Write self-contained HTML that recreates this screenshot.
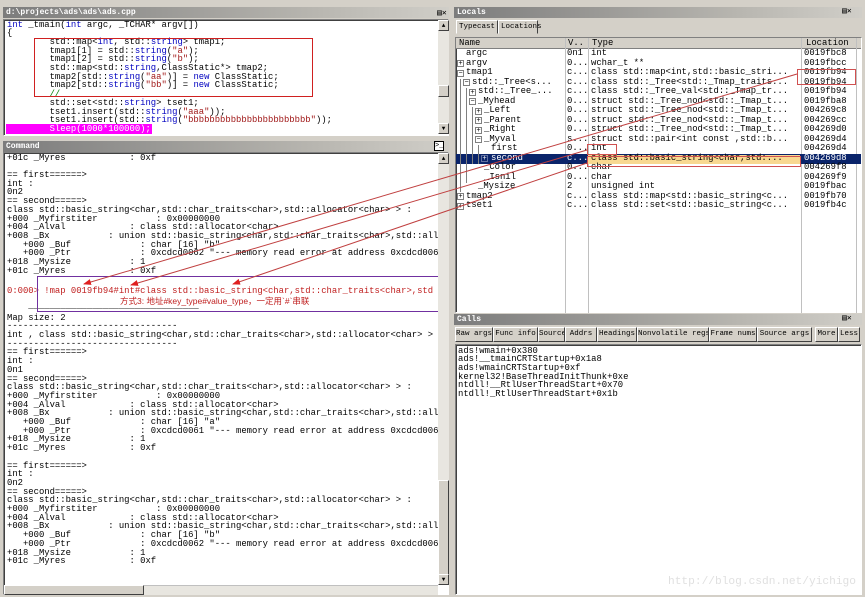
<!DOCTYPE html>
<html><head><meta charset="utf-8"><style>
*{margin:0;padding:0;box-sizing:border-box}
body{width:865px;height:597px;background:#d4d0c8;position:relative;overflow:hidden;font-family:"Liberation Mono","DejaVu Sans Mono",monospace;font-size:9px;color:#000}
.abs{position:absolute}
.tb{position:absolute;height:11px;background:linear-gradient(90deg,#7c7c7c,#b8b6b0 70%,#d0cec8);color:#fff;font-size:8px;font-weight:bold;line-height:11px;padding-left:3px;font-family:"Liberation Mono",monospace}
.pane{position:absolute;background:#fff;border:1px solid #808080;border-right-color:#fff;border-bottom-color:#fff;box-shadow:inset 1px 1px 0 #404040}
pre{position:absolute;font-family:"Liberation Mono",monospace;font-size:8.9px;line-height:8.7px;white-space:pre;margin:0}
.kw{color:#0000c0}.st{color:#a01818}.cm{color:#008000}
.sb{position:absolute;background:#e8e6e0;width:11px}
.sbb{position:absolute;width:11px;height:11px;background:#d4d0c8;border:1px solid;border-color:#fff #404040 #404040 #fff;font-size:6px;line-height:9px;text-align:center}
.t{position:absolute;height:9.5px;line-height:9.5px;font-size:8.9px;white-space:pre}
.bx{position:absolute;width:7px;height:7px;border:1px solid #808080;font-size:7px;line-height:5px;text-align:center;background:#fff;color:#000;font-family:"Liberation Sans",sans-serif}
.btn{position:absolute;top:327px;height:15px;background:#d4d0c8;border:1px solid;border-color:#fff #404040 #404040 #fff;font-size:7.5px;line-height:13px;text-align:center;white-space:nowrap;overflow:hidden}
</style></head><body>

<!-- LEFT: code window -->
<div class="tb" style="left:3px;top:7px;width:446px">d:\projects\ads\ads\ads.cpp</div>
<div class="abs" style="left:437px;top:8px;font-size:8px;color:#000">▤✕</div>
<div class="pane" style="left:3px;top:19px;width:446px;height:117px"></div>
<div class="abs" style="left:6px;top:124px;width:146px;height:10px;background:#ff00ff"></div>
<pre style="left:7px;top:20.5px"><span class="kw">int</span> _tmain(<span class="kw">int</span> argc, _TCHAR* argv[])
{
        std::map&lt;<span class="kw">int</span>, std::<span class="kw">string</span>&gt; tmap1;
        tmap1[1] = std::<span class="kw">string</span>(<span class="st">"a"</span>);
        tmap1[2] = std::<span class="kw">string</span>(<span class="st">"b"</span>);
        std::map&lt;std::<span class="kw">string</span>,ClassStatic*&gt; tmap2;
        tmap2[std::<span class="kw">string</span>(<span class="st">"aa"</span>)] = <span class="kw">new</span> ClassStatic;
        tmap2[std::<span class="kw">string</span>(<span class="st">"bb"</span>)] = <span class="kw">new</span> ClassStatic;
        <span class="cm">//</span>
        std::set&lt;std::<span class="kw">string</span>&gt; tset1;
        tset1.insert(std::<span class="kw">string</span>(<span class="st">"aaa"</span>));
        tset1.insert(std::<span class="kw">string</span>(<span class="st">"bbbbbbbbbbbbbbbbbbbbbbb"</span>));
<span style="color:#fff">        Sleep(1000*100000);</span></pre>
<div class="abs" style="left:34px;top:38px;width:279px;height:59px;border:1px solid #d02020"></div>
<div class="sb" style="left:438px;top:20px;height:114px"></div>
<div class="sbb" style="left:438px;top:20px">▲</div>
<div class="sbb" style="left:438px;top:85px;height:12px"></div>
<div class="sbb" style="left:438px;top:123px">▼</div>

<!-- command window -->
<div class="tb" style="left:3px;top:141px;width:446px">Command</div>
<div class="abs" style="left:434px;top:141px;width:10px;height:10px;border:1px solid #000;background:#fff;font-size:7px;line-height:8px">&gt;_</div>
<div class="pane" style="left:3px;top:152px;width:446px;height:443px"></div>
<pre style="left:7px;top:153.6px">+01c _Myres            : 0xf

== first======&gt;
int :
0n2
== second=====&gt;
class std::basic_string&lt;char,std::char_traits&lt;char&gt;,std::allocator&lt;char&gt; &gt; :
+000 _Myfirstiter           : 0x00000000
+004 _Alval            : class std::allocator&lt;char&gt;
+008 _Bx           : union std::basic_string&lt;char,std::char_traits&lt;char&gt;,std::all
   +000 _Buf             : char [16] "b"
   +000 _Ptr             : 0xcdcd0062 "--- memory read error at address 0xcdcd0062
+018 _Mysize           : 1
+01c _Myres            : 0xf</pre>
<pre style="left:7px;top:286.5px;color:#c02020">0:000&gt; !map 0019fb94#int#class std::basic_string&lt;char,std::char_traits&lt;char&gt;,std</pre>
<pre style="left:7px;top:301.5px">    ________________________________</pre>
<div class="abs" style="left:120px;top:296px;font-family:'Liberation Sans','Noto Sans CJK SC',sans-serif;font-size:8.5px;color:#c02020;line-height:10px">方式3: 地址#key_type#value_type，一定用`#`串联</div>
<div class="abs" style="left:37px;top:276px;width:410px;height:36px;border:1px solid #7030a0"></div>
<pre style="left:7px;top:313.6px">Map size: 2
--------------------------------
int , class std::basic_string&lt;char,std::char_traits&lt;char&gt;,std::allocator&lt;char&gt; &gt;
--------------------------------
== first======&gt;
int :
0n1
== second=====&gt;
class std::basic_string&lt;char,std::char_traits&lt;char&gt;,std::allocator&lt;char&gt; &gt; :
+000 _Myfirstiter           : 0x00000000
+004 _Alval            : class std::allocator&lt;char&gt;
+008 _Bx           : union std::basic_string&lt;char,std::char_traits&lt;char&gt;,std::all
   +000 _Buf             : char [16] "a"
   +000 _Ptr             : 0xcdcd0061 "--- memory read error at address 0xcdcd0061
+018 _Mysize           : 1
+01c _Myres            : 0xf

== first======&gt;
int :
0n2
== second=====&gt;
class std::basic_string&lt;char,std::char_traits&lt;char&gt;,std::allocator&lt;char&gt; &gt; :
+000 _Myfirstiter           : 0x00000000
+004 _Alval            : class std::allocator&lt;char&gt;
+008 _Bx           : union std::basic_string&lt;char,std::char_traits&lt;char&gt;,std::all
   +000 _Buf             : char [16] "b"
   +000 _Ptr             : 0xcdcd0062 "--- memory read error at address 0xcdcd0062
+018 _Mysize           : 1
+01c _Myres            : 0xf</pre>
<div class="sb" style="left:438px;top:153px;height:432px"></div>
<div class="sbb" style="left:438px;top:153px">▲</div>
<div class="sbb" style="left:438px;top:480px;height:100px;background:#d4d0c8"></div>
<div class="sbb" style="left:438px;top:574px">▼</div>
<div class="abs" style="left:4px;top:585px;width:434px;height:10px;background:#e8e6e0;border-top:1px solid #c0c0c0"></div>
<div class="abs" style="left:4px;top:585px;width:140px;height:10px;background:#d4d0c8;border:1px solid;border-color:#fff #404040 #404040 #fff"></div>

<!-- RIGHT: locals -->
<div class="tb" style="left:454px;top:7px;width:408px">Locals</div>
<div class="abs" style="left:842px;top:7px;font-size:8px;line-height:10px;color:#000">▤✕</div>
<div class="abs" style="left:456px;top:20px;width:42px;height:14px;border:1px solid;border-color:#fff #404040 #d4d0c8 #fff;font-size:7.5px;line-height:13px;padding-left:2px;background:#d4d0c8">Typecast</div>
<div class="abs" style="left:498px;top:20px;width:40px;height:14px;border:1px solid;border-color:#fff #404040 #d4d0c8 #fff;font-size:7.5px;line-height:13px;padding-left:2px;background:#d4d0c8">Locations</div>
<div class="pane" style="left:455px;top:37px;width:407px;height:276px"></div>
<div class="abs" style="left:456px;top:38px;width:405px;height:11px;background:#d4d0c8;border-bottom:1px solid #808080"></div>
<div class="abs" style="left:565px;top:38px;width:1px;height:275px;background:#c0c0c0"></div>
<div class="abs" style="left:588px;top:38px;width:1px;height:275px;background:#c0c0c0"></div>
<div class="abs" style="left:801px;top:38px;width:1px;height:275px;background:#c0c0c0"></div>
<div class="abs" style="left:856px;top:38px;width:1px;height:275px;background:#c0c0c0"></div>
<div class="abs" style="left:456px;top:154px;width:405px;height:10px;background:#0a246a"></div>
<div class="abs" style="left:588px;top:155px;width:212px;height:9px;background:#f8d890"></div>
<div class="t" style="left:459px;top:39px">Name</div>
<div class="t" style="left:568px;top:39px">V..</div>
<div class="t" style="left:592px;top:39px">Type</div>
<div class="t" style="left:806px;top:39px">Location</div>

<!-- tree lines -->
<div class="abs" style="left:460px;top:79px;width:1px;height:113px;background:#808080"></div>
<div class="abs" style="left:466px;top:88px;width:1px;height:95px;background:#808080"></div>
<div class="abs" style="left:472px;top:107px;width:1px;height:57px;background:#808080"></div>
<div class="abs" style="left:478px;top:145px;width:1px;height:19px;background:#808080"></div>

<div class="bx" style="left:457px;top:60px">+</div>
<div class="bx" style="left:457px;top:70px">−</div>
<div class="bx" style="left:463px;top:79px">−</div>
<div class="bx" style="left:469px;top:89px">+</div>
<div class="bx" style="left:469px;top:98px">−</div>
<div class="bx" style="left:475px;top:108px">+</div>
<div class="bx" style="left:475px;top:117px">+</div>
<div class="bx" style="left:475px;top:127px">+</div>
<div class="bx" style="left:475px;top:136px">−</div>
<div class="bx" style="left:481px;top:155px;background:#0a246a;border-color:#6070a0;color:#fff">+</div>
<div class="bx" style="left:457px;top:193px">+</div>
<div class="bx" style="left:457px;top:203px">+</div>

<div class="t" style="left:466px;top:49px">argc</div>
<div class="t" style="left:466px;top:58.5px">argv</div>
<div class="t" style="left:466px;top:68px">tmap1</div>
<div class="t" style="left:472px;top:77.5px">std::_Tree&lt;s...</div>
<div class="t" style="left:478px;top:87px">std::_Tree_...</div>
<div class="t" style="left:478px;top:96.5px">_Myhead</div>
<div class="t" style="left:484px;top:106px">_Left</div>
<div class="t" style="left:484px;top:115.5px">_Parent</div>
<div class="t" style="left:484px;top:125px">_Right</div>
<div class="t" style="left:484px;top:134.5px">_Myval</div>
<div class="t" style="left:491px;top:144px">first</div>
<div class="t" style="left:491px;top:153.5px;color:#fff">second</div>
<div class="t" style="left:484px;top:163px">_Color</div>
<div class="t" style="left:484px;top:172.5px">_Isnil</div>
<div class="t" style="left:478px;top:182px">_Mysize</div>
<div class="t" style="left:466px;top:191.5px">tmap2</div>
<div class="t" style="left:466px;top:201px">tset1</div>

<div class="t" style="left:567px;top:49px">0n1
0...
c...
c...
c...
0...
0...
0...
0...
s...
0...
<span style="color:#fff">c...</span>
0...
0...
2
c...
c...</div>
<div class="t" style="left:591px;top:49px;line-height:9.5px;height:auto">int
wchar_t **
class std::map&lt;int,std::basic_stri...
class std::_Tree&lt;std::_Tmap_traits...
class std::_Tree_val&lt;std::_Tmap_tr...
struct std::_Tree_nod&lt;std::_Tmap_t...
struct std::_Tree_nod&lt;std::_Tmap_t...
struct std::_Tree_nod&lt;std::_Tmap_t...
struct std::_Tree_nod&lt;std::_Tmap_t...
struct std::pair&lt;int const ,std::b...
int
class std::basic_string&lt;char,std:...
char
char
unsigned int
class std::map&lt;std::basic_string&lt;c...
class std::set&lt;std::basic_string&lt;c...</div>
<div class="t" style="left:567px;top:49px;line-height:9.5px;height:auto"></div>
<div class="t" style="left:804px;top:49px;line-height:9.5px;height:auto">0019fbc8
0019fbcc
0019fb94
0019fb94
0019fb94
0019fba8
004269c8
004269cc
004269d0
004269d4
004269d4
<span style="color:#fff">004269d8</span>
004269f8
004269f9
0019fbac
0019fb70
0019fb4c</div>
<div class="abs" style="left:797px;top:69px;width:59px;height:16px;border:1px solid #d05050"></div>
<div class="abs" style="left:587px;top:144px;width:30px;height:11px;border:1px solid #d05050"></div>
<div class="abs" style="left:587px;top:156px;width:214px;height:11px;border:1px solid #d05050"></div>

<!-- calls -->
<div class="tb" style="left:454px;top:314px;width:408px">Calls</div>
<div class="abs" style="left:842px;top:314px;font-size:8px;line-height:10px">▤✕</div>
<div class="btn" style="left:455px;width:38px">Raw args</div>
<div class="btn" style="left:493px;width:45px">Func info</div>
<div class="btn" style="left:538px;width:27px">Source</div>
<div class="btn" style="left:565px;width:32px">Addrs</div>
<div class="btn" style="left:597px;width:40px">Headings</div>
<div class="btn" style="left:637px;width:72px">Nonvolatile regs</div>
<div class="btn" style="left:709px;width:48px">Frame nums</div>
<div class="btn" style="left:757px;width:55px">Source args</div>
<div class="btn" style="left:815px;width:23px">More</div>
<div class="btn" style="left:838px;width:22px">Less</div>
<div class="pane" style="left:455px;top:344px;width:407px;height:251px"></div>
<pre style="left:458px;top:346.6px">ads!wmain+0x380
ads!__tmainCRTStartup+0x1a8
ads!wmainCRTStartup+0xf
kernel32!BaseThreadInitThunk+0xe
ntdll!__RtlUserThreadStart+0x70
ntdll!_RtlUserThreadStart+0x1b</pre>
<div class="abs" style="left:668px;top:576px;font-family:'Liberation Mono',monospace;font-size:11.2px;color:#e0e0e0;white-space:nowrap">http://blog.csdn.net/yichigo</div>

<svg class="abs" style="left:0;top:0" width="865" height="597">
<defs><marker id="a" markerWidth="8" markerHeight="6" refX="7" refY="3" orient="auto"><path d="M0,0L8,3L0,6z" fill="#e02020"/></marker></defs>
<g stroke="#c04040" stroke-width="1" fill="none" marker-end="url(#a)">
<line x1="797" y1="74" x2="84" y2="284"/>
<line x1="587" y1="150" x2="131" y2="285"/>
<line x1="587" y1="163" x2="233" y2="284"/>
</g></svg>
</body></html>
